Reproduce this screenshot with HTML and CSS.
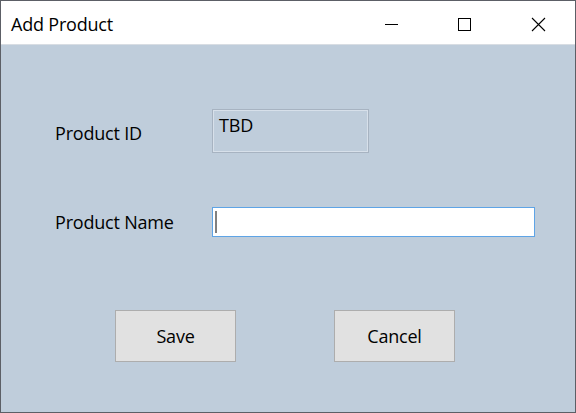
FILE: index.html
```html
<!DOCTYPE html>
<html>
<head>
<meta charset="utf-8">
<link rel="stylesheet" href="styles.css">
</head>
<body>
<div class="window">
  <div class="titlebar">
    <span class="title">Add Product</span>
    <div class="controls">
      <span class="ctl"><svg width="15" height="15" viewBox="0 0 15 15"><path d="M1 7.5H14" stroke="#000" stroke-width="1"/></svg></span>
      <span class="ctl"><svg width="15" height="15" viewBox="0 0 15 15"><rect x="1.5" y="1.5" width="12" height="12" fill="none" stroke="#000" stroke-width="1"/></svg></span>
      <span class="ctl"><svg width="15" height="15" viewBox="0 0 15 15"><path d="M1 1L14 14M14 1L1 14" stroke="#000" stroke-width="1.1"/></svg></span>
    </div>
  </div>
  <div class="content">
    <div class="form">
      <label class="lbl lbl-id">Product ID</label>
      <div class="readonly">TBD</div>
      <label class="lbl lbl-name">Product Name</label>
      <div class="input"><span class="caret"></span></div>
    </div>
    <div class="buttons">
      <button class="btn">Save</button>
      <button class="btn">Cancel</button>
    </div>
  </div>
</div>
</body>
</html>
```

FILE: styles.css
```css
html, body {
  margin: 0;
  padding: 0;
  width: 576px;
  height: 413px;
  overflow: hidden;
}
body {
  font-family: "Open Sans", "Noto Sans", sans-serif;
  color: #000;
}
.window {
  box-sizing: border-box;
  width: 576px;
  height: 413px;
  border: 1px solid #5c5f66;
  display: flex;
  flex-direction: column;
  background: #bfcddb;
}
.titlebar {
  height: 43px;
  background: #fff;
  border-bottom: 1px solid #d8dde3;
  display: flex;
  align-items: center;
  flex-shrink: 0;
}
.title {
  font-size: 18px;
  padding-left: 10px;
  padding-top: 2px;
  flex: 1;
  letter-spacing: -0.2px;
}
.controls {
  display: flex;
  align-items: center;
  height: 100%;
}
.ctl {
  width: 73.5px;
  display: flex;
  justify-content: center;
  align-items: center;
  height: 100%;
  padding-top: 3px;
  box-sizing: border-box;
}
.ctl svg { display: block; }
.content {
  flex: 1;
  padding: 64px 0 0 54px;
}
.form {
  display: grid;
  grid-template-columns: 157px 323px;
  grid-template-rows: 44px 30px;
  row-gap: 54px;
  align-items: center;
}
.lbl {
  font-size: 18px;
  letter-spacing: -0.2px;
}
.lbl-id { margin-top: 4px; }
.readonly {
  box-sizing: border-box;
  height: 44px;
  width: 157px;
  border: 1px solid #a7b3c1;
  box-shadow: inset 0 0 0 1px #d7e0ea;
  padding: 4px 0 0 6px;
  font-size: 18px;
  line-height: 22px;
  letter-spacing: -0.2px;
}
.input {
  box-sizing: border-box;
  height: 30px;
  width: 323px;
  background: #fff;
  border: 1px solid #5ea4e6;
  display: flex;
  align-items: center;
  padding-left: 2px;
}
.caret {
  width: 2px;
  height: 22px;
  background: #808080;
}
.buttons {
  display: flex;
  gap: 98px;
  padding: 73px 0 0 60px;
}
.btn {
  box-sizing: border-box;
  width: 121px;
  height: 52px;
  background: #e1e1e1;
  border: 1px solid #adadad;
  font-family: "Open Sans", "Noto Sans", sans-serif;
  font-size: 18px;
  color: #000;
  padding: 0;
  letter-spacing: -0.2px;
}
```
